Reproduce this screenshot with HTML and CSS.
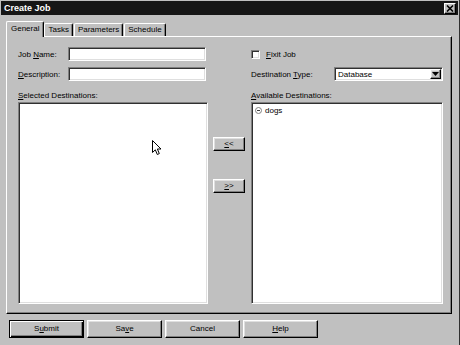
FILE: index.html
```html
<html>
<head>
<meta charset="utf-8">
<title>Create Job</title>
<link rel="stylesheet" href="styles.css">
</head>
<body>
<div class="window">
    <div class="titlebar">
        <span class="title">Create Job</span>
        <span class="close">
            <svg width="8" height="7" viewBox="0 0 8 7"><path d="M1 0.5 L7 6.5 M7 0.5 L1 6.5" stroke="#000" stroke-width="1.6"/></svg>
        </span>
    </div>
    <div class="tabs">
        <div class="tab active">General</div>
        <div class="tab">Tasks</div>
        <div class="tab">Parameters</div>
        <div class="tab">Schedule</div>
    </div>
    <div class="panel">
        <div class="col">
            <div class="row">
                <span class="lbl">Job <u>N</u>ame:</span>
                <div class="field input"></div>
            </div>
            <div class="row">
                <span class="lbl"><u>D</u>escription:</span>
                <div class="field input"></div>
            </div>
            <div class="caption"><u>S</u>elected Destinations:</div>
            <div class="field list left-list">
                <svg class="cursor" width="11" height="16" viewBox="0 0 11 16"><path d="M0.5 0.5 L0.5 12.5 L3.3 9.8 L5.3 14.5 L7.3 13.6 L5.4 9 L9 9 Z" fill="#fff" stroke="#000" stroke-width="1"/></svg>
            </div>
        </div>
        <div class="mid">
            <div class="btn move"><u>&lt;</u>&lt;</div>
            <div class="btn move"><u>&gt;</u>&gt;</div>
        </div>
        <div class="col">
            <div class="row">
                <span class="field check"></span>
                <span class="check-lbl"><u>F</u>ixit Job</span>
            </div>
            <div class="row">
                <span class="lbl type-lbl">Destination <u>T</u>ype:</span>
                <div class="field select">
                    <span class="value">Database</span>
                    <span class="btn drop">
                        <svg width="7" height="4" viewBox="0 0 7 4"><path d="M0 0 L7 0 L3.5 4 Z" fill="#000"/></svg>
                    </span>
                </div>
            </div>
            <div class="caption"><u>A</u>vailable Destinations:</div>
            <div class="field list right-list">
                <div class="item">
                    <svg width="7" height="7" viewBox="0 0 7 7"><circle cx="3.5" cy="3.5" r="3" fill="#fff" stroke="#808080"/><path d="M2 3.5 L5 3.5" stroke="#404040"/></svg>
                    <span>dogs</span>
                </div>
            </div>
        </div>
    </div>
    <div class="actions">
        <div class="btn action default">S<u>u</u>bmit</div>
        <div class="btn action">Sa<u>v</u>e</div>
        <div class="btn action">Cancel</div>
        <div class="btn action"><u>H</u>elp</div>
    </div>
</div>
</body>
</html>
```

FILE: styles.css
```css
body{
    margin:0;
    font-family:"Liberation Sans", Arial, sans-serif;
    font-size:8px;
    color:#000;
    background:#c0c0c0;
}
.window{
    width:460px;
    height:345px;
    box-sizing:border-box;
    padding:1px 1px 0 1px;
    background:#c0c0c0;
    border-right:1px solid #303030;
    display:flex;
    flex-direction:column;
}
.titlebar{
    height:14px;
    background:#161616;
    display:flex;
    align-items:center;
    justify-content:space-between;
    padding-left:3px;
}
.title{
    color:#fff;
    font-weight:bold;
    font-size:9px;
}
.close{
    width:12px;
    height:11px;
    box-sizing:border-box;
    margin-right:2px;
    background:#c0c0c0;
    border:1px solid;
    border-color:#fff #000 #000 #fff;
    box-shadow:inset -1px -1px 0 #808080;
    display:flex;
    align-items:center;
    justify-content:center;
}
.tabs{
    height:21px;
    display:flex;
    align-items:flex-end;
    padding-left:7px;
}
.tab{
    height:13px;
    box-sizing:border-box;
    padding:0 3px;
    line-height:12px;
    border:1px solid;
    border-bottom:none;
    border-color:#fff #000 #000 #fff;
    box-shadow:inset -1px 0 0 #808080;
    border-radius:2px 2px 0 0;
    margin-right:1px;
}
.tab.active{
    height:16px;
    line-height:13px;
    padding:0 4px;
    margin:0 0 -1px -2px;
    background:#c0c0c0;
    position:relative;
    z-index:1;
}
.panel{
    margin:0 6px 0 5px;
    height:278px;
    box-sizing:border-box;
    padding:10px 9px 0 11px;
    border:1px solid;
    border-color:#fff #000 #000 #fff;
    box-shadow:inset -1px -1px 0 #808080;
    display:grid;
    grid-template-columns:190px 43px 192px;
}
.col{
    display:flex;
    flex-direction:column;
}
.row{
    height:14px;
    display:flex;
    align-items:center;
    margin-bottom:6px;
}
.lbl{
    width:50px;
}
.type-lbl{
    width:83px;
}
.field{
    box-sizing:border-box;
    background:#fff;
    border:1px solid;
    border-color:#808080 #fff #fff #808080;
    box-shadow:inset 1px 1px 0 #303030, inset -1px -1px 0 #dfdfdf;
}
.input{
    width:138px;
    height:14px;
}
.check{
    width:9px;
    height:9px;
}
.check-lbl{
    margin-left:6px;
}
.select{
    width:109px;
    height:14px;
    display:flex;
    align-items:center;
    justify-content:space-between;
    padding:2px 1px 2px 3px;
}
.caption{
    margin-top:3px;
    height:12px;
    line-height:11px;
}
.list{
    height:202px;
    position:relative;
}
.cursor{
    position:absolute;
    left:133px;
    top:37px;
}
.item{
    display:flex;
    align-items:center;
    gap:3px;
    padding:3px 0 0 3px;
}
.btn{
    box-sizing:border-box;
    background:#c0c0c0;
    border:1px solid;
    border-color:#fff #000 #000 #fff;
    box-shadow:inset -1px -1px 0 #808080, inset 1px 1px 0 #dfdfdf;
    text-align:center;
}
.drop{
    width:11px;
    height:10px;
    display:flex;
    align-items:center;
    justify-content:center;
}
.mid{
    display:flex;
    flex-direction:column;
    padding:90px 0 0 5px;
}
.move{
    width:32px;
    height:14px;
    line-height:12px;
    margin-bottom:28px;
}
.actions{
    display:flex;
    gap:3px;
    padding:6px 0 0 8px;
}
.action{
    width:75px;
    height:18px;
    line-height:16px;
}
.default{
    border:1px solid #000;
    box-shadow:inset 1px 1px 0 #fff, inset -1px -1px 0 #000, inset -2px -2px 0 #808080;
}
```
